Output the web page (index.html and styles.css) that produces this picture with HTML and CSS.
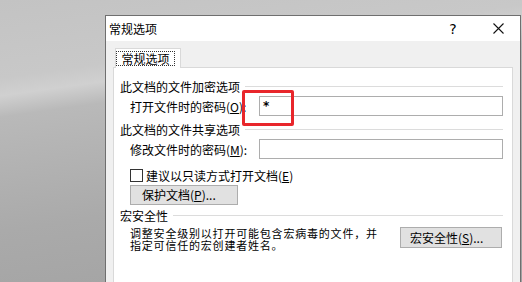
FILE: index.html
```html
<!DOCTYPE html>
<html lang="zh-CN">
<head>
  <meta charset="UTF-8" />
  <title>常规选项</title>
  <link rel="stylesheet" href="styles.css">
</head>
<body>
  <div class="desk">
    <div class="dialog">
      <div class="titlebar">
        <span class="title">常规选项</span>
        <span class="help">?</span>
        <span class="close">
          <svg width="11" height="11" viewBox="0 0 11 11"><path d="M0.5 0.5L10.5 10.5M10.5 0.5L0.5 10.5" stroke="#111" stroke-width="1.1" fill="none"/></svg>
        </span>
      </div>

      <div class="dlg-body">
        <div class="tabs">
          <div class="tab"><span class="focus">常规选项</span></div>
        </div>

        <div class="panel">
          <div class="group-head"><span>此文档的文件加密选项</span></div>
          <div class="row">
            <span class="label">打开文件时的密码(<u>O</u>):</span>
            <div class="field">*</div>
          </div>

          <div class="group-head gap3"><span>此文档的文件共享选项</span></div>
          <div class="row">
            <span class="label">修改文件时的密码(<u>M</u>):</span>
            <div class="field"></div>
          </div>

          <div class="row check-row">
            <span class="checkbox"></span>
            <span>建议以只读方式打开文档(<u>E</u>)</span>
          </div>
          <div class="row">
            <button class="btn protect">保护文档(<u>P</u>)...</button>
          </div>

          <div class="group-head"><span>宏安全性</span></div>
          <div class="row macro-row">
            <p class="desc">调整安全级别以打开可能包含宏病毒的文件，并<br>指定可信任的宏创建者姓名。</p>
            <button class="btn macro">宏安全性(<u>S</u>)...</button>
          </div>
        </div>
      </div>
    </div>
  </div>

  <!-- red highlight drawn over the password box -->
  <div class="highlight"></div>
</body>
</html>
```

FILE: styles.css
```css
html, body {
  margin: 0;
  padding: 0;
}

body {
  width: 522px;
  height: 282px;
  overflow: hidden;
  position: relative;
  font-family: 'Noto Sans CJK SC', 'Noto Sans', sans-serif;
  font-size: 12px;
  color: #000;
}

.desk {
  height: 282px;
  box-sizing: border-box;
  padding: 15px 0 0 105px;
  display: flex;
  background: linear-gradient(172deg, #c3c3c3 0%, #c8c8c8 22%, #d0d0d0 27%, #b9b9b9 33%, #aaaaaa 65%, #a1a1a1 100%);
}

.dialog {
  width: 416px;
  box-sizing: border-box;
  border: 1px solid #6f6f6f;
  border-bottom: none;
  display: flex;
  flex-direction: column;
  background: #f0f0f0;
}

.titlebar {
  height: 25px;
  background: #fff;
  display: flex;
  align-items: center;
  padding-left: 3px;
}

.title {
  line-height: 14px;
}

.help {
  margin-left: auto;
  width: 30px;
  text-align: center;
  font-family: 'DejaVu Sans', sans-serif;
  font-size: 14px;
  margin-right: 8px;
}

.close {
  width: 44px;
  display: flex;
  justify-content: center;
  align-items: center;
}

.dlg-body {
  flex: 1;
  padding: 7px 7px 0;
  display: flex;
  flex-direction: column;
}

.tabs {
  display: flex;
  padding-left: 2px;
}

.tab {
  width: 66px;
  height: 20px;
  box-sizing: border-box;
  border: 1px solid #d9d9d9;
  border-bottom: none;
  background: #fff;
  margin-bottom: -1px;
  position: relative;
  z-index: 1;
  display: flex;
  justify-content: center;
  align-items: center;
}

.focus {
  border: 1px dotted #333;
  padding: 0 4px;
  line-height: 13px;
  margin-right: 5px;
}

.panel {
  flex: 1;
  background: #fff;
  border: 1px solid #d9d9d9;
  border-bottom: none;
  padding: 8px 9px 0 6px;
}

.group-head {
  height: 20px;
  display: flex;
  align-items: center;
}

.group-head::after {
  content: "";
  flex: 1;
  height: 1px;
  background: #dcdcdc;
  margin-left: 5px;
}

.gap3 {
  margin-top: 3px;
}

.row {
  height: 20px;
  display: flex;
  align-items: center;
  margin-left: 10px;
}

.label {
  width: 129px;
}

.field {
  flex: 1;
  height: 20px;
  box-sizing: border-box;
  border: 1px solid #adadad;
  background: #fff;
  padding-left: 3px;
  line-height: 18px;
  font-family: 'DejaVu Sans', sans-serif;
  font-size: 12px;
  font-weight: bold;
}

.check-row {
  margin-top: 6px;
}

.checkbox {
  width: 13px;
  height: 13px;
  box-sizing: border-box;
  border: 1px solid #333;
  background: #fff;
  margin-right: 3px;
}

.btn {
  height: 20px;
  box-sizing: border-box;
  border: 1px solid #adadad;
  background: #e1e1e1;
  font-family: inherit;
  font-size: 12px;
  color: #000;
  padding: 0 0 0 11px;
  text-align: left;
  line-height: 16px;
}

.protect {
  width: 108px;
}

.macro-row {
  height: auto;
  margin-top: 2px;
  align-items: flex-start;
}

.desc {
  flex: 1;
  margin: 0;
  font-size: 11px;
  letter-spacing: 0.8px;
  line-height: 12px;
}

.macro {
  width: 102px;
  height: 21px;
  padding-left: 9px;
  margin-right: 1px;
}

.highlight {
  position: absolute;
  left: 242px;
  top: 90px;
  width: 52px;
  height: 36px;
  box-sizing: border-box;
  border: 3px solid #e8262b;
  border-radius: 2px;
}
```
